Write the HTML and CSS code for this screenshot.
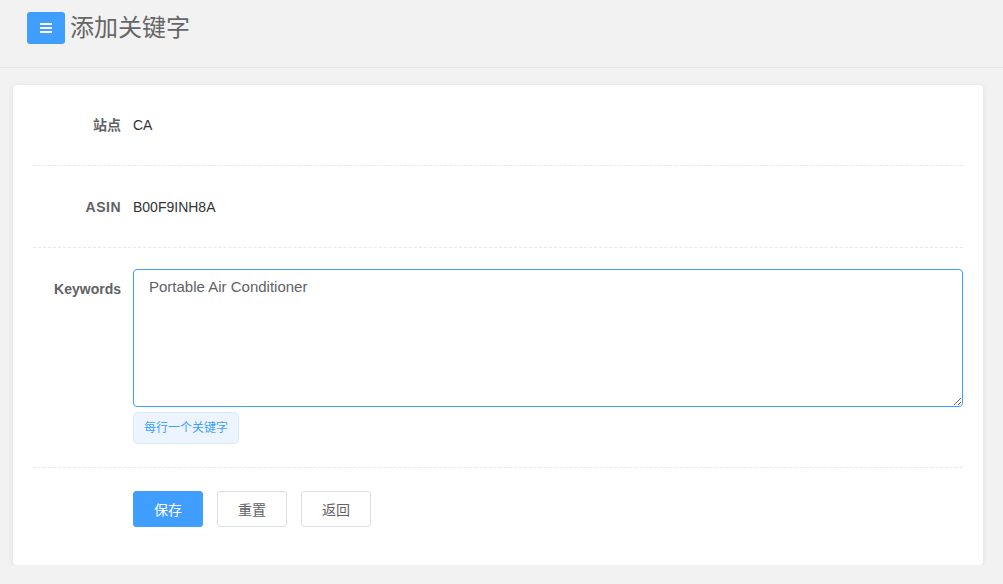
FILE: index.html
```html
<!DOCTYPE html>
<html lang="zh-CN">
<head>
    <meta charset="UTF-8">
    <title>添加关键字</title>
    <link rel="stylesheet" href="styles.css">
</head>
<body>
    <div class="header">
        <span class="menu-btn">
            <svg width="12" height="10" viewBox="0 0 12 10"><rect x="0" y="0" width="12" height="2" fill="#fff"/><rect x="0" y="4" width="12" height="2" fill="#fff"/><rect x="0" y="8" width="12" height="2" fill="#fff"/></svg>
        </span>
        <h1>添加关键字</h1>
    </div>

    <div class="card">
        <div class="row">
            <label>站点</label>
            <div class="value">CA</div>
        </div>
        <div class="row row-asin">
            <label class="asin">ASIN</label>
            <div class="value">B00F9INH8A</div>
        </div>
        <div class="row row-keywords">
            <label>Keywords</label>
            <div class="field">
                <textarea>Portable Air Conditioner</textarea>
                <span class="hint">每行一个关键字</span>
            </div>
        </div>
        <div class="row row-actions">
            <label></label>
            <div class="actions">
                <button class="btn btn-primary">保存</button>
                <button class="btn">重置</button>
                <button class="btn">返回</button>
            </div>
        </div>
    </div>
</body>
</html>
```

FILE: styles.css
```css
body {
    margin: 0;
    background-color: #f2f2f2;
    font-family: 'Liberation Sans', 'Noto Sans CJK SC', sans-serif;
    font-size: 14px;
    color: #333;
}
.header {
    height: 68px;
    box-sizing: border-box;
    display: flex;
    align-items: flex-start;
    padding: 12px 0 0 27px;
    border-bottom: 1px solid #e6e8ec;
}
.menu-btn {
    width: 38px;
    height: 32px;
    border-radius: 3px;
    background-color: #409eff;
    display: flex;
    align-items: center;
    justify-content: center;
}
.header h1 {
    margin: 0 0 0 5px;
    font-size: 24px;
    font-weight: normal;
    line-height: 32px;
    color: #666;
}
.card {
    margin: 17px 20px 0 13px;
    padding: 0 20px;
    background: #fff;
    border-radius: 4px;
    box-shadow: 0 1px 6px rgba(0,0,0,0.08);
    height: 480px;
    box-sizing: border-box;
}
.row {
    display: flex;
    padding: 20px 0;
    border-bottom: 1px dashed #e8e8e8;
}
.row label {
    width: 88px;
    flex-shrink: 0;
    text-align: right;
    padding-right: 12px;
    line-height: 40px;
    font-weight: bold;
    color: #606266;
}
.row label.asin {
    letter-spacing: 0.5px;
}
.value {
    line-height: 40px;
    color: #333;
}
.row-asin {
    padding-top: 21px;
}
.row-keywords {
    padding-top: 21px;
    padding-bottom: 23px;
}
.field {
    flex: 1;
}
textarea {
    display: block;
    width: 100%;
    height: 138px;
    box-sizing: border-box;
    padding: 7px 15px;
    border: 1px solid #409eff;
    border-radius: 4px;
    outline: none;
    resize: vertical;
    font-family: 'Liberation Sans', sans-serif;
    font-size: 15px;
    line-height: 20px;
    color: #606266;
}
.hint {
    display: inline-block;
    margin-top: 5px;
    height: 32px;
    line-height: 30px;
    padding: 0 10px;
    box-sizing: border-box;
    background-color: #ecf5ff;
    border: 1px solid #d9ecff;
    border-radius: 4px;
    font-size: 12px;
    color: #409eff;
}
.row-actions {
    border-bottom: none;
    padding-top: 23px;
}
.actions {
    display: flex;
    gap: 14px;
}
.btn {
    width: 70px;
    height: 36px;
    border: 1px solid #dcdfe6;
    border-radius: 3px;
    background: #fff;
    font-family: 'Liberation Sans', 'Noto Sans CJK SC', sans-serif;
    font-size: 14px;
    color: #606266;
    cursor: pointer;
}
.btn-primary {
    background-color: #409eff;
    border-color: #409eff;
    color: #fff;
}
```
